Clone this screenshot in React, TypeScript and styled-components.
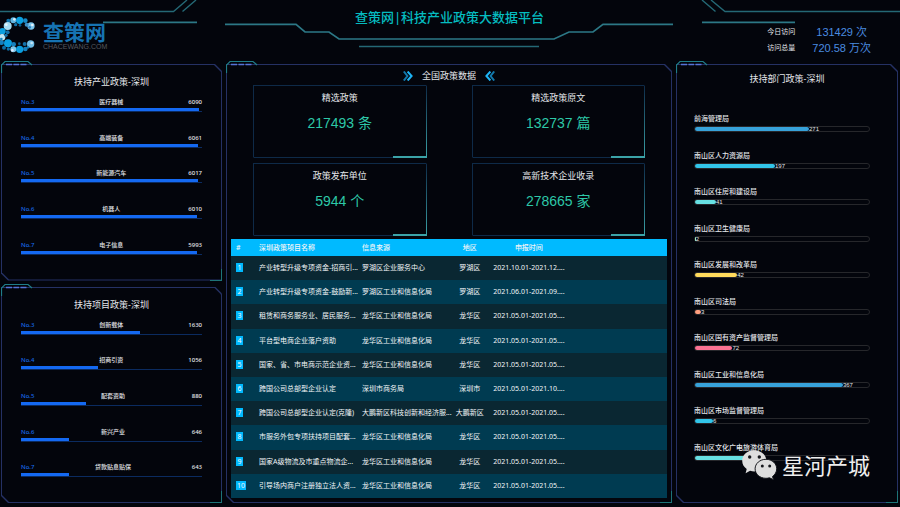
import React from "react";
import styled, { createGlobalStyle } from "styled-components";

const sans = `"Noto Sans", "Noto Sans CJK SC", sans-serif`;
const arial = `"Liberation Sans", "Noto Sans CJK SC", sans-serif`;

const GlobalStyle = createGlobalStyle`
  * { box-sizing: border-box; }
  body {
    margin: 0;
    background: #03050c;
    color: #e4e6ea;
    font-family: ${sans};
  }
  h1, h2, h3, p, ol, ul { margin: 0; padding: 0; font-weight: 400; }
  ol, ul { list-style: none; }
`;

const Page = styled.div`
  position: relative;
  display: flex;
  flex-direction: column;
  min-height: 100vh;
  padding: 0 2px 4px 1px;
`;

const Header = styled.header`
  position: relative;
  display: grid;
  grid-template-columns: 1fr auto 1fr;
  align-items: start;
  height: 64px;
`;

const HeaderLines = styled.svg`
  position: absolute;
  inset: 0 -2px auto -1px;
  width: calc(100% + 3px);
  height: 61px;
  z-index: -1;
`;

const Logo = styled.a`
  display: flex;
  align-items: flex-start;
  gap: 7px;
  padding-top: 16px;
  color: #1673b3;
  text-decoration: none;
`;

const LogoText = styled.span`
  display: flex;
  flex-direction: column;
  padding-top: 6px;
`;

const LogoName = styled.strong`
  font-size: 21px;
  line-height: 21px;
  font-weight: 700;
`;

const LogoDomain = styled.span`
  color: #55585e;
  font-family: ${arial};
  font-size: 7px;
  line-height: 8px;
`;

const PageTitle = styled.h1`
  padding-top: 8px;
  color: #05bcc0;
  font-size: 13px;
  line-height: 18px;
  font-weight: 500;
`;

const Visits = styled.div`
  display: grid;
  grid-template-columns: auto auto;
  justify-content: end;
  align-items: center;
  column-gap: 17px;
  padding: 24px 27px 0 0;
  line-height: 16px;
`;

const VisitLabel = styled.span`
  font-size: 7px;
`;

const VisitValue = styled.span`
  color: #4a8ce0;
  font-family: ${arial};
  font-size: 11px;
  text-align: center;
`;

const Dashboard = styled.main`
  flex: 1;
  display: grid;
  grid-template-columns: 221fr 446fr 222fr;
  gap: 4px;
`;

const LeftColumn = styled.div`
  display: grid;
  grid-template-rows: 1fr 1fr;
  gap: 6px;
`;

const chamfer =
  "polygon(0 0, calc(100% - 7px) 0, 100% 7px, 100% 100%, 7px 100%, 0 calc(100% - 7px))";

const PanelBox = styled.section`
  position: relative;
  isolation: isolate;
  display: flex;
  flex-direction: column;
  &::before,
  &::after {
    content: "";
    position: absolute;
    z-index: -1;
    inset: 0;
    background: #253164;
    clip-path: ${chamfer};
  }
  &::after {
    inset: 1px;
    background: #03050c;
  }
`;

const PanelTab = styled.svg`
  position: absolute;
  left: 0;
  top: -4px;
  width: 32px;
  height: 13px;
`;

const PanelCorner = styled.span`
  position: absolute;
  right: 0;
  bottom: 0;
  width: 12px;
  height: 12px;
  border-right: 1px solid #1d7478;
  border-bottom: 1px solid #1d7478;
`;

const PanelTitle = styled.h2<{ $top: number }>`
  padding-top: ${(p) => p.$top}px;
  font-size: 9px;
  line-height: 12px;
  text-align: center;
`;

const RankList = styled.ol`
  flex: 1;
  display: grid;
  grid-auto-rows: 1fr;
  padding: 10px 20px 4px;
`;

const RankText = styled.div`
  display: flex;
  justify-content: space-between;
  font-size: 6px;
  line-height: 8px;
  font-weight: 500;
`;

const RankNo = styled.span`
  color: #1769e6;
`;

const RankTrack = styled.div`
  height: 6px;
  padding-top: 2px;
  border-bottom: 1px solid #0b2b60;
`;

const RankFill = styled.div`
  height: 3px;
  background: #1469f2;
`;

const Center = styled(PanelBox)`
  padding: 6px 5px 5px;
`;

const CenterTitle = styled.h2`
  display: flex;
  justify-content: center;
  align-items: center;
  gap: 9px;
  font-size: 9px;
  line-height: 12px;
`;

const Cards = styled.div`
  display: grid;
  grid-template-columns: 1fr 1fr;
  gap: 5px 45px;
  padding: 3px 22px;
`;

const Card = styled.article`
  height: 73px;
  padding-top: 6px;
  border: 1px solid #0e2a48;
  border-right-color: transparent;
  border-bottom-color: transparent;
  background:
    linear-gradient(#3ba3a8, #3ba3a8) right bottom / 34px 2px no-repeat border-box,
    linear-gradient(#0e2a48, #3ba3a8) right bottom / 1px 100% no-repeat border-box,
    linear-gradient(#0e2a48, #0e2a48) right bottom / 100% 1px no-repeat border-box;
  text-align: center;
`;

const CardTitle = styled.h3`
  font-size: 9px;
  line-height: 12px;
`;

const CardValue = styled.p`
  padding-top: 9px;
  color: #2dc8a8;
  font-family: ${arial};
  font-size: 14px;
  line-height: 20px;
`;

const Table = styled.table`
  width: 100%;
  height: 259px;
  table-layout: fixed;
  border-collapse: collapse;
  font-size: 7px;
  line-height: 10px;
  text-align: left;
  white-space: nowrap;
  color: #f2f5f7;
`;

const HeadRow = styled.tr`
  height: 17px;
  background: #00baff;
`;

const BodyRow = styled.tr`
  background: #0a2732;
  &:nth-child(even) {
    background: #003b51;
  }
`;

const HeadCell = styled.th<{ $width?: string }>`
  width: ${(p) => p.$width ?? "auto"};
  padding: 0;
  font-weight: 500;
  &:first-child { padding-left: 5px; }
  &:nth-child(4), &:last-child { text-align: center; }
  &:last-child { padding-right: 94px; }
`;

const Cell = styled.td`
  padding: 0;
  &:first-child { padding-left: 5px; }
  &:nth-child(4), &:last-child { text-align: center; }
  &:last-child { padding-right: 94px; }
`;

const Badge = styled.span`
  display: inline-block;
  padding: 0 1px;
  min-width: 7px;
  background: #00baff;
  line-height: 9px;
  text-align: center;
`;

const DeptList = styled.ol`
  flex: 1;
  display: grid;
  grid-auto-rows: 1fr;
  padding: 29px 28px 24px 18px;
`;

const DeptName = styled.div`
  font-size: 7px;
  line-height: 10px;
  font-weight: 500;
  white-space: nowrap;
`;

const DeptTrack = styled.div`
  display: flex;
  align-items: center;
  height: 6px;
  margin-top: 2px;
  border: 1px solid #26272b;
  border-radius: 3px;
  font-family: ${arial};
  font-size: 6px;
  line-height: 6px;
`;

const DeptFill = styled.div`
  height: 4px;
  border-radius: 2px;
`;

const Watermark = styled.div`
  position: absolute;
  right: 30px;
  bottom: 26px;
  display: flex;
  align-items: center;
  gap: 4px;
  color: #eeeeee;
  font-size: 22px;
  line-height: 32px;
`;

type Rank = { no: number; name: string; value: number; width: number };

const industries: Rank[] = [
  { no: 3, name: "医疗器械", value: 6090, width: 98.5 },
  { no: 4, name: "高端装备", value: 6061, width: 98 },
  { no: 5, name: "新能源汽车", value: 6017, width: 97.6 },
  { no: 6, name: "机器人", value: 6010, width: 97.4 },
  { no: 7, name: "电子信息", value: 5993, width: 97.2 },
];

const projects: Rank[] = [
  { no: 3, name: "创新载体", value: 1630, width: 66 },
  { no: 4, name: "招商引资", value: 1056, width: 42.7 },
  { no: 5, name: "配套资助", value: 880, width: 35.7 },
  { no: 6, name: "新兴产业", value: 646, width: 26.3 },
  { no: 7, name: "贷款贴息贴保", value: 643, width: 26.3 },
];

const cards = [
  ["精选政策", "217493 条"],
  ["精选政策原文", "132737 篇"],
  ["政策发布单位", "5944 个"],
  ["高新技术企业收录", "278665 家"],
];

const policies = [
  ["产业转型升级专项资金-招商引...", "罗湖区企业服务中心", "罗湖区", "2021.10.01-2021.12...."],
  ["产业转型升级专项资金-鼓励新...", "罗湖区工业和信息化局", "罗湖区", "2021.06.01-2021.09...."],
  ["租赁和商务服务业、居民服务...", "龙华区工业和信息化局", "龙华区", "2021.05.01-2021.05...."],
  ["平台型电商企业落户资助", "龙华区工业和信息化局", "龙华区", "2021.05.01-2021.05...."],
  ["国家、省、市电商示范企业资...", "龙华区工业和信息化局", "龙华区", "2021.05.01-2021.05...."],
  ["跨国公司总部型企业认定", "深圳市商务局", "深圳市", "2021.05.01-2021.10...."],
  ["跨国公司总部型企业认定(克隆)", "大鹏新区科技创新和经济服...", "大鹏新区", "2021.05.01-2021.05...."],
  ["市服务外包专项扶持项目配套...", "龙华区工业和信息化局", "龙华区", "2021.05.01-2021.05...."],
  ["国家A级物流及市重点物流企...", "龙华区工业和信息化局", "龙华区", "2021.05.01-2021.05...."],
  ["引导场内商户注册独立法人资...", "龙华区工业和信息化局", "龙华区", "2021.05.01-2021.05...."],
];

const departments = [
  { name: "前海管理局", value: 271, width: 65.5, color: "#37a2da" },
  { name: "南山区人力资源局", value: 197, width: 46, color: "#32c5e9" },
  { name: "南山区住房和建设局", value: 41, width: 12, color: "#67e0e3" },
  { name: "南山区卫生健康局", value: 2, width: 0.5, color: "#9fe6b8" },
  { name: "南山区发展和改革局", value: 42, width: 24.3, color: "#ffdb5c" },
  { name: "南山区司法局", value: 3, width: 3.5, color: "#ff9f7f" },
  { name: "南山区国有资产监督管理局", value: 72, width: 21.5, color: "#fb7293" },
  { name: "南山区工业和信息化局", value: 367, width: 85, color: "#37a2da" },
  { name: "南山区市场监督管理局", value: 6, width: 10.3, color: "#32c5e9" },
  { name: "南山区文化广电旅游体育局", value: 133, width: 32, color: "#67e0e3" },
];

const logoDots: [number, number, number, string][] = [
  [40, 61, 9, "#5fb4e0"], [59, 61, 11, "#0a9fe0"], [76, 62, 7, "#1688c4"], [25, 62, 6, "#0d74ad"],
  [23, 78, 12, "#a5dcf2"], [93, 78, 11, "#7cc4ea"], [80, 74, 6, "#3a8fc8"], [7, 94, 10, "#0a9fe0"],
  [23, 97, 6, "#1270a8"], [6, 112, 10, "#bfe6f5"], [24, 130, 12, "#0a9fe0"], [5, 128, 7, "#1580bd"],
  [41, 133, 7, "#1580bd"], [12, 143, 6, "#0d6ca3"], [25, 147, 5, "#0d6ca3"], [40, 148, 9, "#7fc8ea"],
  [59, 148, 11, "#0a9fe0"], [76, 147, 7, "#1580bd"], [92, 132, 11, "#6fbde6"], [74, 132, 6, "#1270a8"],
  [58, 131, 4, "#0d5c8c"], [84, 142, 4, "#1580bd"], [47, 74, 5, "#1270a8"], [60, 76, 4, "#0d5c8c"],
  [18, 106, 5, "#1270a8"], [43, 58, 4, "#d8eef8"], [97, 75, 4, "#e6f2fa"], [89, 82, 4, "#2b7fc0"],
  [37, 151, 4, "#e0e8fa"], [95, 129, 4, "#c4e4f6"], [4, 117, 4, "#1688c4"], [19, 74, 4, "#e4f4fa"],
];

function LogoMark() {
  return (
    <svg width="35" height="38" viewBox="3 48 105 114" overflow="visible" aria-hidden="true">
      {logoDots.map(([x, y, r, fill], i) => (
        <circle key={i} cx={x} cy={y} r={r} fill={fill} />
      ))}
    </svg>
  );
}

function Frame() {
  return (
    <>
      <PanelTab viewBox="0 0 32 13" fill="none" aria-hidden="true">
        <path d="M.5 13V5L4 1.5H27L31 5" stroke="#1f7d89" strokeWidth="1.2" />
        <path d="M5 4.5h6M12.500 4.500h5.500M19.500 4.500h6" stroke="#5573d6" strokeWidth="1.4" />
      </PanelTab>
      <PanelCorner />
    </>
  );
}

function RankPanel({ title, items }: { title: string; items: Rank[] }) {
  return (
    <PanelBox>
      <Frame />
      <PanelTitle $top={12}>{title}</PanelTitle>
      <RankList>
        {items.map((item) => (
          <li key={item.no}>
            <RankText>
              <RankNo>No.{item.no}</RankNo>
              <span>{item.name}</span>
              <span>{item.value}</span>
            </RankText>
            <RankTrack>
              <RankFill style={{ width: `${item.width}%` }} />
            </RankTrack>
          </li>
        ))}
      </RankList>
    </PanelBox>
  );
}

function Chevrons({ left = false }: { left?: boolean }) {
  return (
    <svg width="10" height="10" viewBox="0 0 10 10" fill="none" strokeWidth="2" aria-hidden="true">
      <g transform={left ? "matrix(-1 0 0 1 10 0)" : undefined}>
        <path d="M.8.5 4.4 5 .8 9.5" stroke="#1279ad" />
        <path d="M4.6.5 8.600 5 4.600 9.500" stroke="#1db4f5" />
      </g>
    </svg>
  );
}

export default function App() {
  return (
    <>
      <GlobalStyle />
      <Page>
        <Header>
          <HeaderLines viewBox="0 0 900 61" preserveAspectRatio="none" fill="none" aria-hidden="true">
            <g stroke="#246875" strokeWidth="1.4">
              <path d="M0 11.5H173.5L187 0M182.5 11.5 196 0" />
              <path d="M702 0 715.5 11.5M711 0 725 11.5H900" />
              <path d="M359 46.5H539" />
            </g>
            <g stroke="#2c7886" strokeWidth="1.7">
              <path d="M103 22.3H197M702 22.3H795" />
              <path d="M225 24.3H296L305 32H329L339 39H554L569 32H593L603 24.3H673" />
            </g>
          </HeaderLines>
          <Logo href="#">
            <LogoMark />
            <LogoText>
              <LogoName>查策网</LogoName>
              <LogoDomain>CHACEWANG.COM</LogoDomain>
            </LogoText>
          </Logo>
          <PageTitle>查策网|科技产业政策大数据平台</PageTitle>
          <Visits>
            <VisitLabel>今日访问</VisitLabel>
            <VisitValue>131429 次</VisitValue>
            <VisitLabel>访问总量</VisitLabel>
            <VisitValue>720.58 万次</VisitValue>
          </Visits>
        </Header>

        <Dashboard>
          <LeftColumn>
            <RankPanel title="扶持产业政策-深圳" items={industries} />
            <RankPanel title="扶持项目政策-深圳" items={projects} />
          </LeftColumn>

          <Center>
            <Frame />
            <CenterTitle>
              <Chevrons />
              全国政策数据
              <Chevrons left />
            </CenterTitle>
            <Cards>
              {cards.map(([title, value]) => (
                <Card key={title}>
                  <CardTitle>{title}</CardTitle>
                  <CardValue>{value}</CardValue>
                </Card>
              ))}
            </Cards>
            <Table>
              <thead>
                <HeadRow>
                  <HeadCell $width="28px">#</HeadCell>
                  <HeadCell $width="23.6%">深圳政策项目名称</HeadCell>
                  <HeadCell $width="21.3%">信息来源</HeadCell>
                  <HeadCell $width="30px">地区</HeadCell>
                  <HeadCell>申报时间</HeadCell>
                </HeadRow>
              </thead>
              <tbody>
                {policies.map((row, i) => (
                  <BodyRow key={i}>
                    <Cell>
                      <Badge>{i + 1}</Badge>
                    </Cell>
                    {row.map((text, j) => (
                      <Cell key={j}>{text}</Cell>
                    ))}
                  </BodyRow>
                ))}
              </tbody>
            </Table>
          </Center>

          <PanelBox>
            <Frame />
            <PanelTitle $top={9}>扶持部门政策-深圳</PanelTitle>
            <DeptList>
              {departments.map((d) => (
                <li key={d.name}>
                  <DeptName>{d.name}</DeptName>
                  <DeptTrack>
                    <DeptFill style={{ width: `${d.width}%`, background: d.color }} />
                    {d.value}
                  </DeptTrack>
                </li>
              ))}
            </DeptList>
          </PanelBox>
        </Dashboard>

        <Watermark>
          <svg width="36" height="30" viewBox="0 0 36 30" aria-hidden="true">
            <path
              fill="#dedede"
              d="M12.2.3C5.4.3.2 4.9.2 10.8c0 3.3 1.700 6.300 4.500 8.300L3.600 23.300l4.500-2.500c1.300.4 2.700.6 4.100.6 6.700 0 12.200-4.700 12.200-10.600S18.900.3 12.200.3Z"
            />
            <circle cx="7.7" cy="7" r="1.7" fill="#15171c" />
            <circle cx="17.3" cy="7" r="1.7" fill="#15171c" />
            <path
              fill="#dedede"
              stroke="#15171c"
              strokeWidth="1"
              d="M24 9.3c-6.100 0-10.900 4.200-10.900 9.500s4.800 9.500 10.900 9.500c1.200 0 2.400-.2 3.500-.5l4 1.900-1-3.200c2.600-1.800 4.200-4.600 4.200-7.700 0-5.300-4.700-9.500-10.700-9.500Z"
            />
            <circle cx="20.3" cy="16" r="1.5" fill="#15171c" />
            <circle cx="27.7" cy="16" r="1.5" fill="#15171c" />
          </svg>
          星河产城
        </Watermark>
      </Page>
    </>
  );
}
